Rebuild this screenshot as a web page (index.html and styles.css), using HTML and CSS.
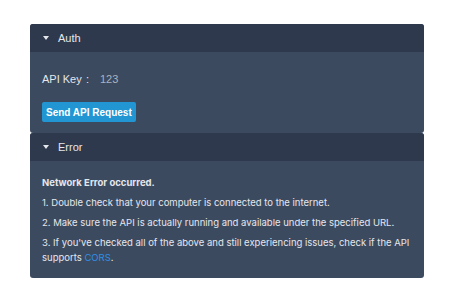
FILE: index.html
```html
<!DOCTYPE html>
<html>
<head>
<meta charset="utf-8">
<link rel="stylesheet" href="styles.css">
</head>
<body>
<div class="wrap">
  <section class="panel">
    <div class="head"><span class="caret"></span>Auth</div>
    <div class="body auth">
      <div class="field"><span class="label">API Key</span><span class="colon">:</span><span class="val">123</span></div>
      <button class="btn">Send API Request</button>
    </div>
  </section>
  <section class="panel">
    <div class="head"><span class="caret"></span>Error</div>
    <div class="body err">
      <p class="title">Network Error occurred.</p>
      <p>1. Double check that your computer is connected to the internet.</p>
      <p>2. Make sure the API is actually running and available under the specified URL.</p>
      <p>3. If you've checked all of the above and still experiencing issues, check if the API supports <a href="#">CORS</a>.</p>
    </div>
  </section>
</div>
</body>
</html>
```
FILE: styles.css
```css
html, body { margin: 0; padding: 0; background: #fff; }
body { font-family: "Liberation Sans", Arial, sans-serif; }
.wrap { width: 394px; margin: 24px 0 0 30px; display: flex; flex-direction: column; }
.panel { border-radius: 3px; overflow: hidden; background: #3c4a60; }
.head { height: 28px; background: #2e394d; color: #e4e7ec; font-size: 11px; display: flex; align-items: center; padding-left: 13px; }
.caret { width: 0; height: 0; border-left: 3.5px solid transparent; border-right: 3.5px solid transparent; border-top: 4px solid #e4e7ec; margin-right: 9px; }
.body { padding: 0 12px; color: #e4e7ec; }
.auth { padding-top: 20px; padding-bottom: 11px; }
.field { font-size: 11px; display: flex; align-items: center; height: 14px; }
.label { width: 44px; }
.colon { width: 14px; }
.val { color: #aab2bf; }
.btn { margin-top: 16px; background: #2196d3; color: #fff; border: 0; border-radius: 2px; font: 700 10px "Liberation Sans", Arial, sans-serif; height: 20px; padding: 0 4px; display: block; }
.err { padding-top: 14px; padding-bottom: 13px; font-family: Inter, "Noto Sans", sans-serif; font-size: 9.5px; line-height: 15px; }
.err p { margin: 0 0 5px; }
.err p:last-child { margin-bottom: 0; }
.err .title { font-weight: 700; }
.err a { color: #2f8ee8; text-decoration: none; }
```
